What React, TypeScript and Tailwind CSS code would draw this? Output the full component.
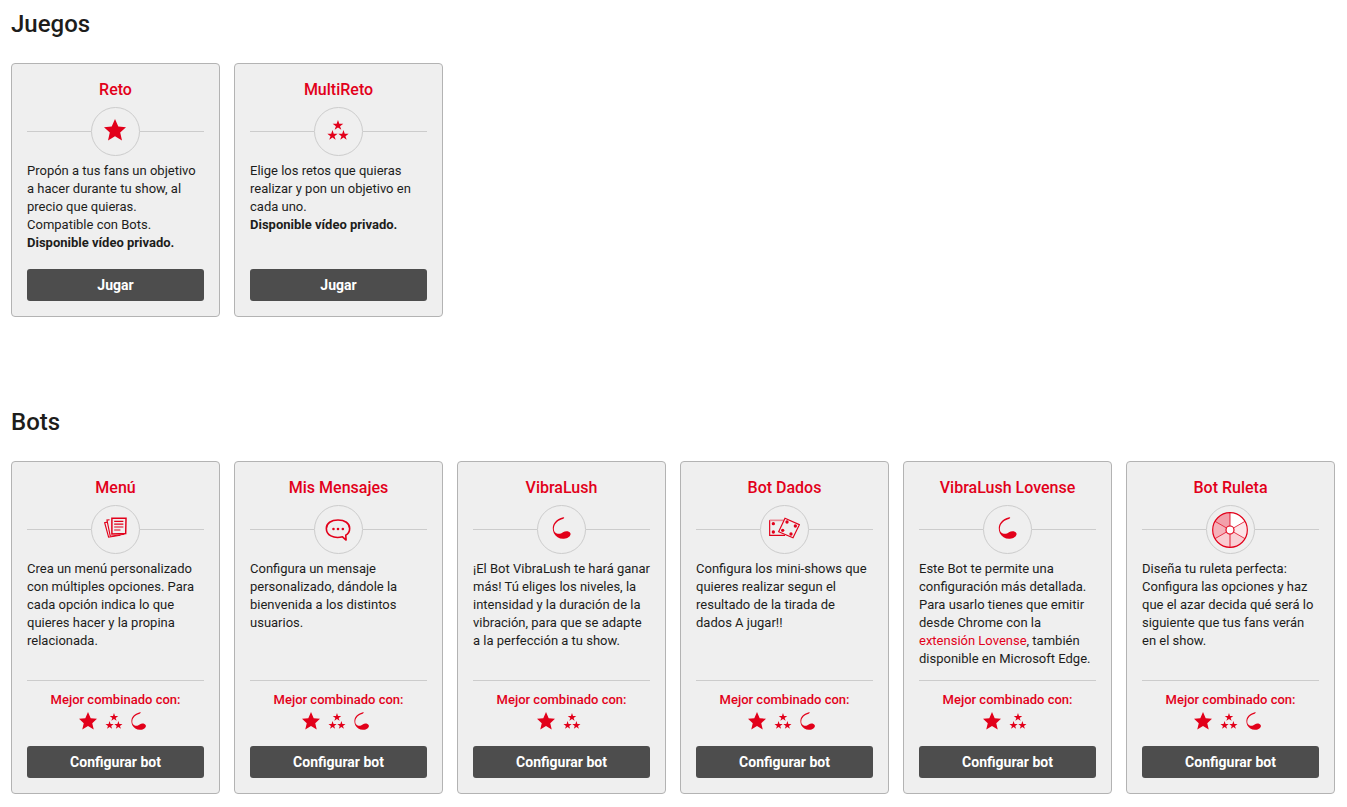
import React from "react";

type IconName = "star" | "stars" | "menu" | "chat" | "lush" | "dice" | "wheel";

const STAR = "11,0 14.3,7.6 22,8.3 16.2,13.6 18,21.5 11,17.2 4,21.5 5.8,13.6 0,8.3 7.7,7.6";
const THIN_STAR = "11,0 13.7,8 22,8.2 15.3,13.2 17.8,21 11,16.3 4.2,21 6.7,13.2 0,8.2 8.3,8";

function Star({ className }: { className: string }) {
  return (
    <svg viewBox="0 0 22 22" className={className} aria-hidden="true">
      <polygon points={STAR} fill="#e2001a" />
    </svg>
  );
}

function Stars({ className }: { className: string }) {
  return (
    <svg viewBox="0 0 64 60" className={className} fill="#e2001a" aria-hidden="true">
      <polygon points={THIN_STAR} transform="translate(16 0) scale(1.45 1.4)" />
      <polygon points={THIN_STAR} transform="translate(0 30) scale(1.4)" />
      <polygon points={THIN_STAR} transform="translate(33 30) scale(1.4)" />
    </svg>
  );
}

function Lush({ className }: { className: string }) {
  return (
    <svg viewBox="0 0 57 68" className={className} fill="#e2001a" aria-hidden="true">
      <path d="M34 1 C36 0 38 2 36 4 L33 6 C19 9 6 20 5 34 C4 43 7 48 14 51 C22 53 27 51 33 47 C41 42 52 43 56 50 C59 57 50 67 36 67 C22 68 11 61 5 50 C-4 30 4 9 34 1 Z" />
    </svg>
  );
}

function Menu() {
  return (
    <svg viewBox="0 0 70 66" className="h-[22px] w-[23px]" fill="none" stroke="#e2001a" strokeWidth="3.5" aria-hidden="true">
      <path d="M10 15 L2 17 L14 61 L50 55" />
      <path d="M17 8 L9 9 L19 58 L62 52" />
      <path d="M24 3 L67 3 L66 50 L24 51 Z" fill="#efefef" strokeWidth="4.5" />
      <path d="M31 13 H59 M31 21 H59 M31 30 H59 M31 39 H50" />
    </svg>
  );
}

function Chat() {
  return (
    <svg viewBox="0 0 78 68" className="h-[22px] w-[26px]" fill="none" stroke="#e2001a" strokeWidth="5" strokeLinejoin="round" aria-hidden="true">
      <path d="M53 55 C24 62 3 49 3 29 C3 13 18 3 39 3 C60 3 75 13 75 29 C75 38 70 46 63 50 L64 65 Z" />
      <g fill="#e2001a" stroke="none">
        <circle cx="25" cy="31" r="4" />
        <circle cx="39" cy="31" r="4" />
        <circle cx="54" cy="31" r="4" />
      </g>
    </svg>
  );
}

function Dice() {
  return (
    <svg viewBox="0 0 93 64" className="h-[22px] w-[31px]" fill="none" stroke="#e2001a" strokeWidth="3.5" aria-hidden="true">
      <path d="M2 8 V54 H48" />
      <path d="M2 9 H48" stroke="#e98c96" strokeWidth="5" />
      <path d="M48 3 L91 22 L72 61 L29 43 Z" fill="#efefef" />
      <g fill="#e2001a" stroke="none">
        <circle cx="13" cy="19" r="5" />
        <circle cx="13" cy="44" r="5" />
        <circle cx="54" cy="14" r="5" />
        <circle cx="79" cy="26" r="5" />
        <circle cx="41" cy="39" r="5" />
        <circle cx="66" cy="50" r="5" />
      </g>
    </svg>
  );
}

function Wheel() {
  return (
    <svg viewBox="-54 -54 108 108" className="size-9" stroke="#e2001a" aria-hidden="true">
      <g stroke="none">
        <path d="M0 0 V-52 A52 52 0 0 1 45 -26 Z" fill="#ffffff" />
        <path d="M0 0 L45 -26 A52 52 0 0 1 45 26 Z" fill="#fce5e8" />
        <path d="M0 0 L45 26 A52 52 0 0 1 0 52 Z" fill="#f9d0d5" />
        <path d="M0 0 V52 A52 52 0 0 1 -45 26 Z" fill="#f9ccd1" />
        <path d="M0 0 L-45 26 A52 52 0 0 1 -45 -26 Z" fill="#f5b2ba" />
        <path d="M0 0 L-45 -26 A52 52 0 0 1 0 -52 Z" fill="#f2a0aa" />
      </g>
      <path d="M0 -52 V52" strokeWidth="5" opacity="0.5" />
      <path d="M-45 -26 L45 26 M-45 26 L45 -26" strokeWidth="3" opacity="0.75" />
      <circle r="52" fill="none" strokeWidth="3.5" />
      <circle r="12" fill="#ffffff" strokeWidth="3.5" />
    </svg>
  );
}

function CardIcon({ name }: { name: IconName }) {
  switch (name) {
    case "star":
      return <Star className="size-[22px]" />;
    case "stars":
      return <Stars className="h-5 w-[22px]" />;
    case "menu":
      return <Menu />;
    case "chat":
      return <Chat />;
    case "lush":
      return <Lush className="h-[22px] w-[19px]" />;
    case "dice":
      return <Dice />;
    case "wheel":
      return <Wheel />;
  }
}

interface CardData {
  title: string;
  icon: IconName;
  text: React.ReactNode;
  lush?: boolean;
}

const games: CardData[] = [
  {
    title: "Reto",
    icon: "star",
    text: (
      <>
        Propón a tus fans un objetivo a hacer durante tu show, al precio que quieras. Compatible con Bots.
        <strong className="block font-bold">Disponible vídeo privado.</strong>
      </>
    ),
  },
  {
    title: "MultiReto",
    icon: "stars",
    text: (
      <>
        Elige los retos que quieras realizar y pon un objetivo en cada uno.
        <strong className="block font-bold">Disponible vídeo privado.</strong>
      </>
    ),
  },
];

const bots: CardData[] = [
  {
    title: "Menú",
    icon: "menu",
    text: "Crea un menú personalizado con múltiples opciones. Para cada opción indica lo que quieres hacer y la propina relacionada.",
    lush: true,
  },
  {
    title: "Mis Mensajes",
    icon: "chat",
    text: "Configura un mensaje personalizado, dándole la bienvenida a los distintos usuarios.",
    lush: true,
  },
  {
    title: "VibraLush",
    icon: "lush",
    text: "¡El Bot VibraLush te hará ganar más! Tú eliges los niveles, la intensidad y la duración de la vibración, para que se adapte a la perfección a tu show.",
  },
  {
    title: "Bot Dados",
    icon: "dice",
    text: "Configura los mini-shows que quieres realizar segun el resultado de la tirada de dados A jugar!!",
    lush: true,
  },
  {
    title: "VibraLush Lovense",
    icon: "lush",
    text: (
      <>
        Este Bot te permite una configuración más detallada. Para usarlo tienes que emitir desde Chrome con la{" "}
        <a href="#lovense" className="text-[#e2001a]">
          extensión Lovense
        </a>
        , también disponible en Microsoft Edge.
      </>
    ),
  },
  {
    title: "Bot Ruleta",
    icon: "wheel",
    text: "Diseña tu ruleta perfecta: Configura las opciones y haz que el azar decida qué será lo siguiente que tus fans verán en el show.",
    lush: true,
  },
];

function Card({ data, action, children }: { data: CardData; action: string; children?: React.ReactNode }) {
  const centred = data.icon === "wheel" || data.icon === "chat";
  return (
    <article className="flex flex-col rounded border border-[#b3b3b3] bg-[#efefef] p-[15px]">
      <h3 className="text-center text-base leading-[22px] font-medium text-[#e2001a]">{data.title}</h3>
      <div className="mt-1.5 flex items-center">
        <span className="h-px flex-1 bg-[#cccccc]" />
        <span
          className={`flex size-[49px] items-center justify-center rounded-full border border-[#cccccc] pr-px ${
            centred ? "pt-px" : "pb-[3px]"
          }`}
        >
          <CardIcon name={data.icon} />
        </span>
        <span className="h-px flex-1 bg-[#cccccc]" />
      </div>
      <p className="mt-1.5 mb-auto text-[13px] leading-[18px]">{data.text}</p>
      {children}
      <button type="button" className="h-8 w-full cursor-pointer rounded-[3px] bg-[#4d4d4d] text-sm font-bold text-white">
        {action}
      </button>
    </article>
  );
}

export default function App() {
  return (
    <main className="bg-white pt-2 pr-3 pb-3 pl-[11px] font-[Roboto,sans-serif] text-[#1d1d1b]">
      <section>
        <h2 className="text-2xl leading-8 font-medium">Juegos</h2>
        <div className="mt-[23px] grid grid-cols-6 gap-3.5">
          {games.map((g) => (
            <Card key={g.title} data={g} action="Jugar">
              <div className="h-[17px]" />
            </Card>
          ))}
        </div>
      </section>
      <section className="mt-[89px]">
        <h2 className="text-2xl leading-8 font-medium">Bots</h2>
        <div className="mt-[23px] grid grid-cols-6 gap-3.5">
          {bots.map((b) => (
            <Card key={b.title} data={b} action="Configurar bot">
              <div className="mt-3 mb-4 border-t border-[#cccccc] pt-[9px]">
                <p className="text-center text-[13px] leading-5 font-medium text-[#e2001a]">Mejor combinado con:</p>
                <div className="flex h-5 items-center justify-center gap-2 pt-px pr-1.5">
                  <Star className="size-[18px]" />
                  <Stars className="h-4 w-[18px]" />
                  {b.lush && <Lush className="h-[18px] w-[15px]" />}
                </div>
              </div>
            </Card>
          ))}
        </div>
      </section>
    </main>
  );
}
